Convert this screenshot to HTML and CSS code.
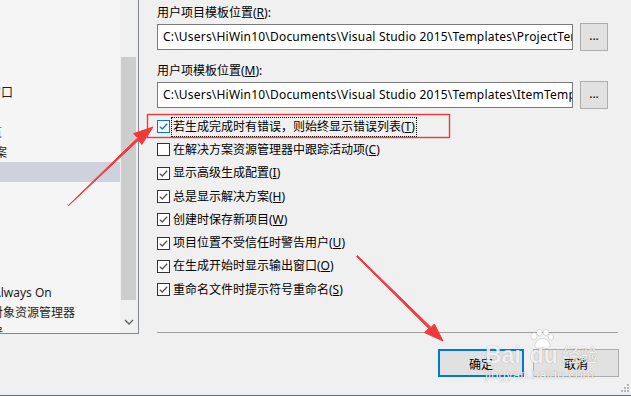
FILE: index.html
```html
<!DOCTYPE html>
<html lang="zh-CN">
<head>
    <meta charset="UTF-8">
    <meta name="viewport" content="width=device-width, initial-scale=1.0">
    <title>选项 - 项目和解决方案</title>
    <link rel="stylesheet" href="styles.css">
</head>
<body>
<div class="dialog">
    <div class="content">
        <!-- left tree (scrolled horizontally, so the labels are cut) -->
        <div class="tree-panel">
            <div class="tree">
                <div class="tree-row"></div>
                <div class="tree-row"></div>
                <div class="tree-row"></div>
                <div class="tree-row"></div>
                <div class="tree-row"><span class="cut-out">输出窗口</span></div>
                <div class="tree-row"></div>
                <div class="tree-row"><span class="cut-preview">预览</span></div>
                <div class="tree-row"><span class="cut-case">方案</span></div>
                <div class="tree-row selected"></div>
                <div class="tree-row"></div>
                <div class="tree-row"></div>
                <div class="tree-row"></div>
                <div class="tree-row"></div>
                <div class="tree-row"></div>
                <div class="tree-row"><span class="cut-always">Always On</span></div>
                <div class="tree-row"><span class="cut-sql">对象资源管理器</span></div>
                <div class="tree-row"><span class="cut-last">文本编辑器</span></div>
            </div>
            <div class="scrollbar">
                <div class="thumb"></div>
                <svg class="scroll-down" width="10" height="6" viewBox="0 0 10 6">
                    <path d="M1 1 L5 5 L9 1"/>
                </svg>
            </div>
        </div>

        <div class="options">
            <div class="field-label">用户项目模板位置(<u>R</u>):</div>
            <div class="path-row">
                <div class="path-box">C:\Users\HiWin10\Documents\Visual Studio 2015\Templates\ProjectTemplates</div>
                <button class="browse">...</button>
            </div>

            <div class="field-label second">用户项模板位置(<u>M</u>):</div>
            <div class="path-row">
                <div class="path-box">C:\Users\HiWin10\Documents\Visual Studio 2015\Templates\ItemTemplates</div>
                <button class="browse">...</button>
            </div>

            <ul class="checks">
                <li class="check focused">
                    <svg class="box" viewBox="0 0 13 13"><rect x="0.5" y="0.5" width="12" height="12"/><path d="M2.8 6.6 L5.2 9 L10.2 3.8"/></svg>
                    <span class="text">若生成完成时有错误，则始终显示错误列表(<u>T</u>)</span>
                </li>
                <li class="check">
                    <svg class="box" viewBox="0 0 13 13"><rect x="0.5" y="0.5" width="12" height="12"/></svg>
                    <span class="text">在解决方案资源管理器中跟踪活动项(<u>C</u>)</span>
                </li>
                <li class="check">
                    <svg class="box" viewBox="0 0 13 13"><rect x="0.5" y="0.5" width="12" height="12"/><path d="M2.8 6.6 L5.2 9 L10.2 3.8"/></svg>
                    <span class="text">显示高级生成配置(<u>I</u>)</span>
                </li>
                <li class="check">
                    <svg class="box" viewBox="0 0 13 13"><rect x="0.5" y="0.5" width="12" height="12"/><path d="M2.8 6.6 L5.2 9 L10.2 3.8"/></svg>
                    <span class="text">总是显示解决方案(<u>H</u>)</span>
                </li>
                <li class="check">
                    <svg class="box" viewBox="0 0 13 13"><rect x="0.5" y="0.5" width="12" height="12"/><path d="M2.8 6.6 L5.2 9 L10.2 3.8"/></svg>
                    <span class="text">创建时保存新项目(<u>W</u>)</span>
                </li>
                <li class="check">
                    <svg class="box" viewBox="0 0 13 13"><rect x="0.5" y="0.5" width="12" height="12"/><path d="M2.8 6.6 L5.2 9 L10.2 3.8"/></svg>
                    <span class="text">项目位置不受信任时警告用户(<u>U</u>)</span>
                </li>
                <li class="check">
                    <svg class="box" viewBox="0 0 13 13"><rect x="0.5" y="0.5" width="12" height="12"/><path d="M2.8 6.6 L5.2 9 L10.2 3.8"/></svg>
                    <span class="text">在生成开始时显示输出窗口(<u>O</u>)</span>
                </li>
                <li class="check">
                    <svg class="box" viewBox="0 0 13 13"><rect x="0.5" y="0.5" width="12" height="12"/><path d="M2.8 6.6 L5.2 9 L10.2 3.8"/></svg>
                    <span class="text">重命名文件时提示符号重命名(<u>S</u>)</span>
                </li>
            </ul>

            <div class="separator"></div>
        </div>
    </div>

    <div class="footer">
        <button class="dlg-btn default">确定</button>
        <button class="dlg-btn">取消</button>
    </div>
    <div class="bottom-edge"></div>

    <!-- size grip -->
    <svg class="grip" width="8" height="8" viewBox="0 0 8 8">
        <rect x="6" y="0" width="2" height="2"/>
        <rect x="3" y="3" width="2" height="2"/><rect x="6" y="3" width="2" height="2"/>
        <rect x="0" y="6" width="2" height="2"/><rect x="3" y="6" width="2" height="2"/><rect x="6" y="6" width="2" height="2"/>
    </svg>

    <!-- watermark over the buttons -->
    <div class="watermark">
        <div class="wm-logo">
            <span class="wm-bai">Bai</span>
            <span class="wm-du">du
                <svg class="wm-paw" width="26" height="20" viewBox="0 0 26 20">
                    <ellipse cx="5" cy="7" rx="3" ry="3.6"/>
                    <ellipse cx="10.5" cy="3.5" rx="2.8" ry="3.3"/>
                    <ellipse cx="17" cy="3.5" rx="2.8" ry="3.3"/>
                    <ellipse cx="22" cy="8" rx="2.6" ry="3.2"/>
                    <path d="M6 17 C6 12 10 9.5 13.5 9.5 C17 9.5 21 12.5 21 16.5 C21 19.5 17 19.5 13.5 18.5 C10 19.5 6 19.5 6 17 Z"/>
                </svg>
            </span>
            <span class="wm-jy">经验</span>
        </div>
        <div class="wm-url">jingyan.baidu.com</div>
    </div>

    <!-- red annotations drawn over the screenshot -->
    <svg class="marks" width="631" height="396" viewBox="0 0 631 396">
        <rect class="mark-box" x="147.5" y="114.5" width="302" height="23"/>
        <polygon class="mark-arrow" points="67.6,204.6 68.4,205.4 137.6,137.9 133.6,133.6 153,127 141.8,144.4 138.6,140.1 68.6,205.6"/>
        <polygon class="mark-arrow" points="357.4,255.6 356.6,256.4 428.8,328.5 424.6,332.6 443,341 434.4,324 431,327.4"/>
    </svg>
</div>
</body>
</html>
```

FILE: styles.css
```css
/* Options dialog, VS 2015 */
body {
    margin: 0;
    padding: 0;
    background-color: #f0f0f0;
    font-family: "Noto Sans", "Noto Sans CJK SC", sans-serif;
    font-size: 12px;
    color: #000;
}
.dialog {
    position: relative;
    width: 631px;
    height: 396px;
    overflow: hidden;
    display: flex;
    flex-direction: column;
}
.content {
    display: flex;
    height: 334px;
}

/* tree */
.tree-panel {
    display: flex;
    width: 138px;
    height: 333px;
    border-right: 1px solid #828790;
    border-bottom: 1px solid #828790;
}
.tree {
    width: 120px;
    padding-top: 2px;
    background-color: #f5f5f5;
    overflow: hidden;
    font-family: "Noto Sans CJK SC", sans-serif;
    color: #1e1e1e;
}
.tree-row {
    height: 20px;
    line-height: 20px;
    white-space: nowrap;
}
.tree-row.selected {
    background-color: #cfd1dc;
}
.cut-out { margin-left: -35px; }
.cut-preview { margin-left: -22px; color: #1d5fb3; }
.cut-case { margin-left: -17px; }
.cut-always { margin-left: -7px; font-family: "Noto Sans", sans-serif; }
.cut-sql { margin-left: -9px; }
.cut-last { margin-left: -57px; }
.scrollbar {
    position: relative;
    width: 18px;
    background-color: #f0f0f0;
}
.thumb {
    margin: 57px 0 0 1px;
    width: 15px;
    height: 243px;
    background-color: #cdcdcd;
}
.scroll-down {
    display: block;
    margin: 19px 0 0 4px;
}
.scroll-down path {
    fill: none;
    stroke: #606060;
    stroke-width: 1.4;
}

/* right side */
.options {
    flex: 1;
    display: flex;
    flex-direction: column;
    padding: 5px 13px 0 18px;
}
.field-label {
    line-height: 16px;
    margin-bottom: 2px;
}
.field-label.second {
    margin-top: 12px;
}
.path-row {
    display: flex;
    align-items: center;
    gap: 7px;
}
.path-box {
    width: 404px;
    height: 24px;
    line-height: 24px;
    padding: 0 5px;
    border: 1px solid #7a7a7a;
    background-color: #fff;
    white-space: nowrap;
    overflow: hidden;
    letter-spacing: 0.2px;
}
.browse {
    width: 28px;
    height: 28px;
    padding: 0 0 4px;
    border: 1px solid #adadad;
    background-color: #e1e1e1;
    font-family: "Noto Sans", sans-serif;
    font-size: 12px;
    color: #000;
}
.checks {
    list-style: none;
    margin: 6px 0 0;
    padding: 0;
}
.check {
    display: flex;
    align-items: center;
    gap: 2px;
    height: 23.3px;
}
.box {
    width: 13px;
    height: 13px;
    flex: none;
}
.box rect {
    fill: #fff;
    stroke: #333;
}
.box path {
    fill: none;
    stroke: #555;
    stroke-width: 1.3;
}
.check .text {
    padding: 1px 1px;
    line-height: 16px;
    white-space: nowrap;
}
.check.focused .box rect,
.check.focused .box path {
    stroke: #0078d7;
}
.check.focused .text {
    outline: 1px dotted #000;
}
.separator {
    margin-top: auto;
    margin-bottom: 1px;
    height: 1px;
    background-color: #a0a0a0;
}

/* buttons */
.footer {
    display: flex;
    justify-content: flex-end;
    gap: 9px;
    height: 61px;
    padding: 15px 12px 0 0;
    box-sizing: border-box;
}
.dlg-btn {
    width: 86px;
    height: 28px;
    border: 1px solid #adadad;
    background-color: #e1e1e1;
    font-family: "Noto Sans CJK SC", sans-serif;
    font-size: 12px;
    color: #000;
}
.dlg-btn.default {
    border: 2px solid #0078d7;
}
.bottom-edge {
    height: 1px;
    background-color: #2b79c2;
}
.grip {
    position: absolute;
    right: 2px;
    bottom: 4px;
}
.grip rect {
    fill: #b8b8b8;
}

/* baidu watermark */
.watermark {
    position: absolute;
    left: 485px;
    top: 326px;
    color: rgba(255, 255, 255, 0.85);
    text-shadow: 0 0 1px rgba(0, 0, 0, 0.35);
}
.wm-logo {
    display: flex;
    align-items: flex-end;
    height: 41px;
}
.wm-bai,
.wm-du {
    font-family: "Liberation Sans", sans-serif;
    font-weight: bold;
    font-size: 23px;
    line-height: 23px;
}
.wm-du {
    position: relative;
    margin-left: 9px;
}
.wm-paw {
    position: absolute;
    left: -1px;
    top: -15px;
    fill: rgba(255, 255, 255, 0.85);
    stroke: rgba(0, 0, 0, 0.2);
    stroke-width: 0.6;
}
.wm-jy {
    margin-left: 4px;
    font-family: "Noto Sans CJK SC", sans-serif;
    font-size: 18px;
    line-height: 25px;
}
.wm-url {
    margin-top: 1px;
    font-family: "Liberation Sans", sans-serif;
    font-size: 13.5px;
    line-height: 14px;
}

/* red annotation marks */
.marks {
    position: absolute;
    left: 0;
    top: 0;
    pointer-events: none;
}
.mark-box {
    fill: none;
    stroke: #f0393b;
    stroke-width: 1.4;
}
.mark-arrow {
    fill: #f0393b;
    stroke: #f0393b;
    stroke-width: 1;
    stroke-linejoin: round;
}
```
